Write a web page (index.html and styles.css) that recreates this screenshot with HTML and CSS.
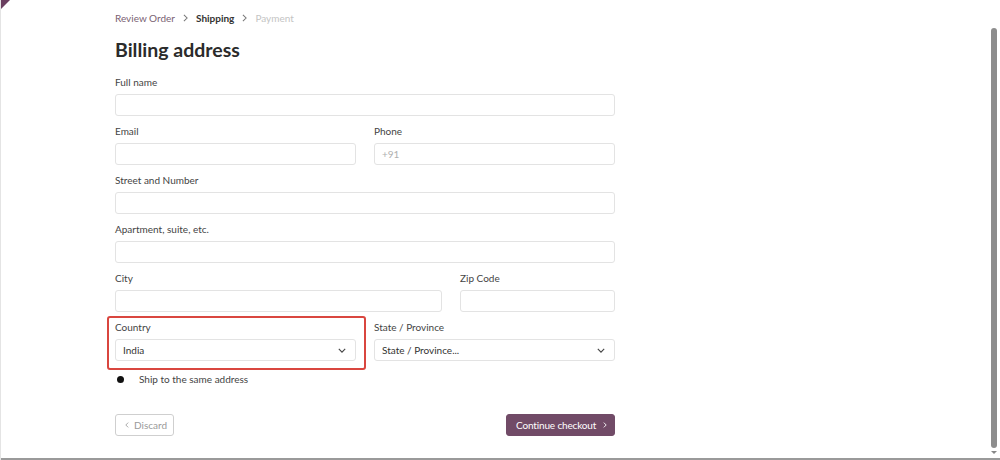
FILE: index.html
```html
<!DOCTYPE html>
<html>
<head>
<meta charset="utf-8">
<link rel="stylesheet" href="styles.css">
</head>
<body>
<div class="corner"></div>
<main class="page">
  <nav class="crumbs">
    <span class="crumb-link">Review Order</span>
    <svg class="sep" viewBox="0 0 6 10" width="5" height="8"><path d="M1 1l4 4-4 4" fill="none" stroke="#777" stroke-width="1.3"/></svg>
    <span class="crumb-active">Shipping</span>
    <svg class="sep" viewBox="0 0 6 10" width="5" height="8"><path d="M1 1l4 4-4 4" fill="none" stroke="#777" stroke-width="1.3"/></svg>
    <span class="crumb-off">Payment</span>
  </nav>
  <h1 class="title">Billing address</h1>
  <form class="form">
    <div class="row one">
      <div class="field"><label>Full name</label><div class="input"></div></div>
    </div>
    <div class="row two">
      <div class="field"><label>Email</label><div class="input"></div></div>
      <div class="field"><label>Phone</label><div class="input ph">+91</div></div>
    </div>
    <div class="row one">
      <div class="field"><label>Street and Number</label><div class="input"></div></div>
    </div>
    <div class="row one">
      <div class="field"><label>Apartment, suite, etc.</label><div class="input"></div></div>
    </div>
    <div class="row city">
      <div class="field"><label>City</label><div class="input"></div></div>
      <div class="field"><label>Zip Code</label><div class="input"></div></div>
    </div>
    <div class="row two">
      <div class="field highlighted"><label>Country</label>
        <div class="input select"><span>India</span><svg class="chev" viewBox="0 0 10 6" width="8" height="5"><path d="M1 1l4 4 4-4" fill="none" stroke="#444" stroke-width="1.4"/></svg></div>
        <div class="mark"></div>
      </div>
      <div class="field"><label>State / Province</label>
        <div class="input select"><span>State / Province...</span><svg class="chev" viewBox="0 0 10 6" width="8" height="5"><path d="M1 1l4 4 4-4" fill="none" stroke="#444" stroke-width="1.4"/></svg></div>
      </div>
    </div>
    <div class="switch-row">
      <span class="switch"><span class="knob"></span></span>
      <span class="switch-label">Ship to the same address</span>
    </div>
    <div class="actions">
      <span class="btn ghost"><svg viewBox="0 0 6 10" width="4" height="6"><path d="M5 1L1 5l4 4" fill="none" stroke="#999" stroke-width="1.4"/></svg>Discard</span>
      <span class="btn primary">Continue checkout<svg viewBox="0 0 6 10" width="4" height="6"><path d="M1 1l4 4-4 4" fill="none" stroke="#fff" stroke-width="1.5"/></svg></span>
    </div>
  </form>
</main>
<div class="scrollbar"><div class="thumb"></div><div class="arrow"></div></div>
<div class="bottom-line"></div>
</body>
</html>
```
FILE: styles.css
```css
html, body {
  margin: 0;
  padding: 0;
  background: #ffffff;
  height: 100%;
}
body {
  font-family: Lato, "Noto Sans", sans-serif;
  color: #333;
  position: relative;
  overflow: hidden;
  border-left: 1px solid #e4e4e4;
  box-sizing: border-box;
}
.corner {
  position: absolute;
  left: 0;
  top: 0;
  width: 0;
  height: 0;
  border-top: 9px solid #6b3f60;
  border-right: 9px solid transparent;
}
.page {
  width: 500px;
  padding: 11px 0 0 114px;
}
.crumbs {
  font-size: 10px;
  line-height: 14px;
  display: flex;
  gap: 8px;
  align-items: center;
}
.crumb-link { color: #7a5f73; }
.crumb-active { color: #333; font-weight: 700; }
.crumb-off { color: #c4c4c4; }
.sep { display: block; }
.title {
  margin: 13px 0 13px;
  font-size: 19.5px;
  line-height: 24px;
  font-weight: 700;
  color: #2b2b2b;
}
.form { display: flex; flex-direction: column; }
.row {
  display: grid;
  column-gap: 18px;
  margin-bottom: 8px;
}
.row.one { grid-template-columns: 1fr; }
.row.two { grid-template-columns: 1fr 1fr; }
.row.city { grid-template-columns: 327px 1fr; }
.field { position: relative; display: flex; flex-direction: column; }
label {
  font-size: 10px;
  line-height: 14px;
  color: #444;
  margin-bottom: 5px;
}
.input {
  height: 22px;
  box-sizing: border-box;
  border: 1px solid #e3e3e3;
  border-radius: 3px;
  background: #fff;
  font-size: 10px;
  line-height: 20px;
  padding: 0 7px;
  color: #333;
}
.input.ph { color: #b0b0b0; }
.select {
  display: flex;
  justify-content: space-between;
  align-items: center;
}
.chev { margin-right: 2px; }
.mark {
  position: absolute;
  left: -8px;
  top: -4px;
  right: -10px;
  bottom: -9px;
  border: 2px solid #d9463f;
  border-radius: 3px;
  pointer-events: none;
}
.switch-row {
  display: flex;
  align-items: center;
  height: 14px;
  margin-top: 3px;
  gap: 7px;
}
.switch {
  width: 17px;
  height: 9px;
  display: flex;
  align-items: center;
}
.knob {
  width: 7px;
  height: 7px;
  border-radius: 50%;
  background: #111;
  margin-left: 2px;
}
.switch-label {
  font-size: 10px;
  color: #444;
}
.actions {
  display: flex;
  justify-content: space-between;
  margin-top: 28px;
}
.btn {
  height: 22px;
  box-sizing: border-box;
  border-radius: 3px;
  font-size: 10px;
  display: flex;
  align-items: center;
  white-space: nowrap;
}
.ghost {
  border: 1px solid #cfcfcf;
  color: #9a9a9a;
  width: 59px;
  padding-left: 9px;
  gap: 5px;
}
.primary {
  background: #714b67;
  border: 1px solid #714b67;
  color: #fff;
  width: 109px;
  padding-left: 9px;
  gap: 7px;
  letter-spacing: -0.15px;
}
.scrollbar {
  position: absolute;
  right: 3px;
  top: 28px;
  width: 6px;
  bottom: 6px;
}
.thumb {
  width: 6px;
  height: 420px;
  border-radius: 3px;
  background: #8d8d8d;
}
.arrow {
  margin: 3px 0 0 0;
  width: 0;
  height: 0;
  border-left: 3px solid transparent;
  border-right: 3px solid transparent;
  border-top: 3px solid #888;
}
.bottom-line {
  position: absolute;
  left: 0;
  right: 0;
  bottom: 0;
  height: 2px;
  background: #9a9a9a;
}
```
